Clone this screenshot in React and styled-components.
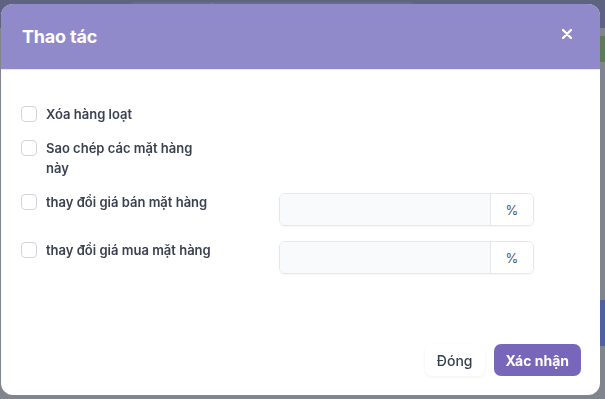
import styled, { createGlobalStyle } from "styled-components";

const GlobalStyle = createGlobalStyle`
  * { box-sizing: border-box; }
  html, body {
    margin: 0;
    padding: 0;
    width: 605px;
    height: 399px;
    overflow: hidden;
    font-family: Inter, "Noto Sans", sans-serif;
  }
`;

const Page = styled.div`
  width: 605px;
  height: 399px;
  background: #80858e;
  display: flex;
  flex-direction: column;
`;

const TopBar = styled.div`
  height: 28px;
  background: #5f6382;
  display: flex;
  align-items: center;
  padding-left: 130px;
  gap: 16px;
`;

const SearchBox = styled.div`
  width: 284px;
  height: 24px;
  background: #686c8a;
  border-radius: 4px;
  color: #8a8ea6;
  font-size: 14px;
  padding-left: 36px;
  line-height: 20px;
`;

const Side = styled.div`
  flex: 1;
  display: flex;
  flex-direction: column;
  align-items: flex-end;
  padding-top: 6px;
`;

const Patch = styled.div`
  width: 8px;
  height: ${(p) => p.$h}px;
  margin-top: ${(p) => p.$top}px;
  background: ${(p) => p.$color};
`;

const Overlay = styled.div`
  position: fixed;
  inset: 0;
  padding: 4px 5px 4px 1px;
  display: flex;
`;

const Modal = styled.div`
  flex: 1;
  background: #fff;
  border-radius: 12px;
  overflow: hidden;
  display: flex;
  flex-direction: column;
`;

const Header = styled.div`
  height: 66px;
  background: #9089ca;
  border-bottom: 1px solid #e9e7ef;
  display: flex;
  align-items: center;
  justify-content: space-between;
  padding: 0 28px 0 21px;
`;

const Title = styled.h2`
  margin: 0;
  color: #fff;
  font-size: 18px;
  font-weight: 700;
  letter-spacing: -0.2px;
`;

const Close = styled.button`
  border: 0;
  background: none;
  padding: 0;
  display: flex;
  margin-top: -6px;
  cursor: pointer;
`;

const Body = styled.div`
  flex: 1;
  padding: 34px 20px 0 20px;
  display: flex;
  flex-direction: column;
  gap: 14px;
`;

const Row = styled.div`
  display: grid;
  grid-template-columns: 258px 255px;
  align-items: start;
`;

const Check = styled.label`
  display: flex;
  align-items: flex-start;
  gap: 9px;
  cursor: pointer;
`;

const Box = styled.span`
  flex: none;
  width: 16px;
  height: 16px;
  margin-top: 2px;
  border: 1px solid #d1d5db;
  border-radius: 4px;
  background: #fff;
`;

const Label = styled.span`
  max-width: 168px;
  font-size: 13px;
  line-height: 20px;
  font-weight: 600;
  color: #3a4150;
`;

const InputGroup = styled.div`
  display: flex;
  height: 33px;
  margin-top: 1px;
  border: 1px solid #e5e7eb;
  border-radius: 6px;
  overflow: hidden;
  box-shadow: 0 1px 2px rgba(0, 0, 0, 0.04);
`;

const Field = styled.input`
  flex: 1;
  min-width: 0;
  border: 0;
  background: #f9fafb;
  outline: none;
`;

const Addon = styled.span`
  width: 43px;
  border-left: 1px solid #e5e7eb;
  display: flex;
  align-items: center;
  justify-content: center;
  font-size: 13px;
  color: #4b5563;
  background: #fff;
`;

const Footer = styled.div`
  display: flex;
  justify-content: flex-end;
  gap: 9px;
  padding: 0 19px 19px 0;
`;

const Button = styled.button`
  height: 32px;
  padding: 0 12px;
  border: 0;
  border-radius: 7px;
  font-family: inherit;
  font-size: 14px;
  font-weight: ${(p) => (p.$primary ? 700 : 500)};
  color: ${(p) => (p.$primary ? "#fff" : "#374151")};
  background: ${(p) => (p.$primary ? "#7866bb" : "#fff")};
  box-shadow: ${(p) => (p.$primary ? "none" : "0 1px 3px rgba(0,0,0,0.06)")};
  cursor: pointer;
`;

const options = [
  { text: "Xóa hàng loạt" },
  { text: "Sao chép các mặt hàng này" },
  { text: "thay đổi giá bán mặt hàng", percent: true },
  { text: "thay đổi giá mua mặt hàng", percent: true },
];

export default function App() {
  return (
    <>
      <GlobalStyle />
      <Page>
        <TopBar>
          <SearchBox>Tìm kiếm</SearchBox>
        </TopBar>
        <Side>
          <Patch $h={26} $top={2} $color="#5f7a5a" />
          <Patch $h={46} $top={238} $color="#4f5fa0" />
        </Side>
      </Page>
      <Overlay>
        <Modal>
          <Header>
            <Title>Thao tác</Title>
            <Close aria-label="Đóng">
              <svg width="10" height="10" viewBox="0 0 10 10">
                <path d="M1 1L9 9M9 1L1 9" stroke="#fff" strokeWidth="2.4" strokeLinecap="round" />
              </svg>
            </Close>
          </Header>
          <Body>
            {options.map((o) => (
              <Row key={o.text}>
                <Check>
                  <Box />
                  <Label>{o.text}</Label>
                </Check>
                {o.percent && (
                  <InputGroup>
                    <Field />
                    <Addon>%</Addon>
                  </InputGroup>
                )}
              </Row>
            ))}
          </Body>
          <Footer>
            <Button>Đóng</Button>
            <Button $primary>Xác nhận</Button>
          </Footer>
        </Modal>
      </Overlay>
    </>
  );
}
